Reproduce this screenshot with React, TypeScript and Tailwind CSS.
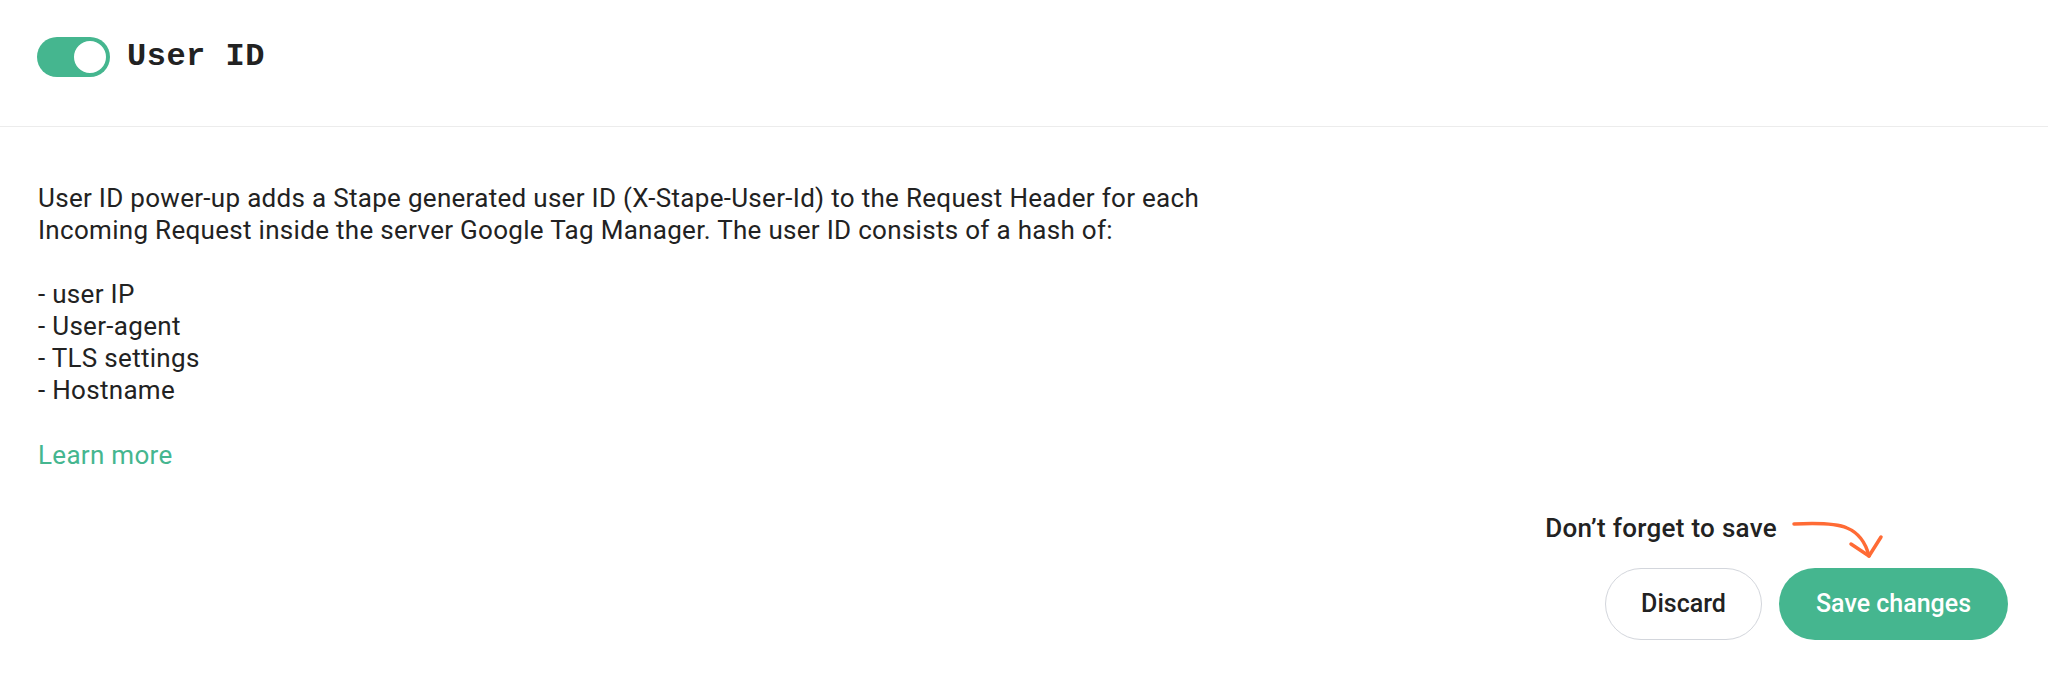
import React from "react";

const Toggle = () => (
  <button
    type="button"
    className="flex h-[40px] w-[73px] items-center justify-end rounded-full bg-[#45b68f] p-[2px]"
  >
    <span className="block h-[36px] w-[36px] rounded-full border-[2px] border-[#45b68f] bg-white" />
  </button>
);

// hand drawn orange arrow pointing at the save button
const HintArrow = () => (
  <svg className="mt-[12px] shrink-0" width="92" height="40" viewBox="0 0 92 40" fill="none">
    <path
      d="M2 4 C 22 3, 44 3, 55 8 C 67 13, 74 24, 77 36"
      stroke="#ff6b35"
      strokeWidth="3.5"
      strokeLinecap="round"
      fill="none"
    />
    <path
      d="M59 24 L77 36 L89 17"
      stroke="#ff6b35"
      strokeWidth="3.5"
      strokeLinecap="round"
      strokeLinejoin="round"
      fill="none"
    />
  </svg>
);

export default function App() {
  return (
    <div className="flex min-h-[680px] w-full flex-col bg-white text-[#222222] font-['Roboto',sans-serif]">
      {/* header */}
      <div className="flex items-center gap-[17px] border-b border-[#ececec] pl-[37px] pt-[37px] pb-[49px]">
        <Toggle />
        <h1 className="font-['Liberation_Mono',monospace] text-[32px] font-bold leading-[40px] tracking-[0.5px] text-[#222222]">
          User ID
        </h1>
      </div>

      {/* body */}
      <div className="px-[38px] pt-[55px] text-[26px] leading-[32px] tracking-[0.3px]">
        <p>
          User ID power-up adds a Stape generated user ID (X-Stape-User-Id) to the Request Header for each
          <br />
          Incoming Request inside the server Google Tag Manager. The user ID consists of a hash of:
          <br />
          <br />
          - user IP
          <br />
          - User-agent
          <br />
          - TLS settings
          <br />- Hostname
        </p>
        <a href="#" className="mt-[33px] block w-fit text-[#45b68f]">
          Learn more
        </a>
      </div>

      {/* footer */}
      <div className="mt-auto flex flex-col items-end px-[40px] pb-[40px]">
        <div className="flex h-[36px] items-start gap-[15px] pr-[124px]">
          <span className="mt-[4px] text-[26px] font-medium leading-[32px] tracking-[0.3px] text-[#222222]">
            Don’t forget to save
          </span>
          <HintArrow />
        </div>
        <div className="mt-[24px] flex gap-[17px]">
          <button
            type="button"
            className="h-[72px] w-[157px] rounded-full border border-[#d3d6dc] bg-white text-[25px] font-medium text-[#222222]"
          >
            Discard
          </button>
          <button
            type="button"
            className="h-[72px] w-[229px] rounded-full bg-[#45b68f] text-[25px] font-medium text-white"
          >
            Save changes
          </button>
        </div>
      </div>
    </div>
  );
}
